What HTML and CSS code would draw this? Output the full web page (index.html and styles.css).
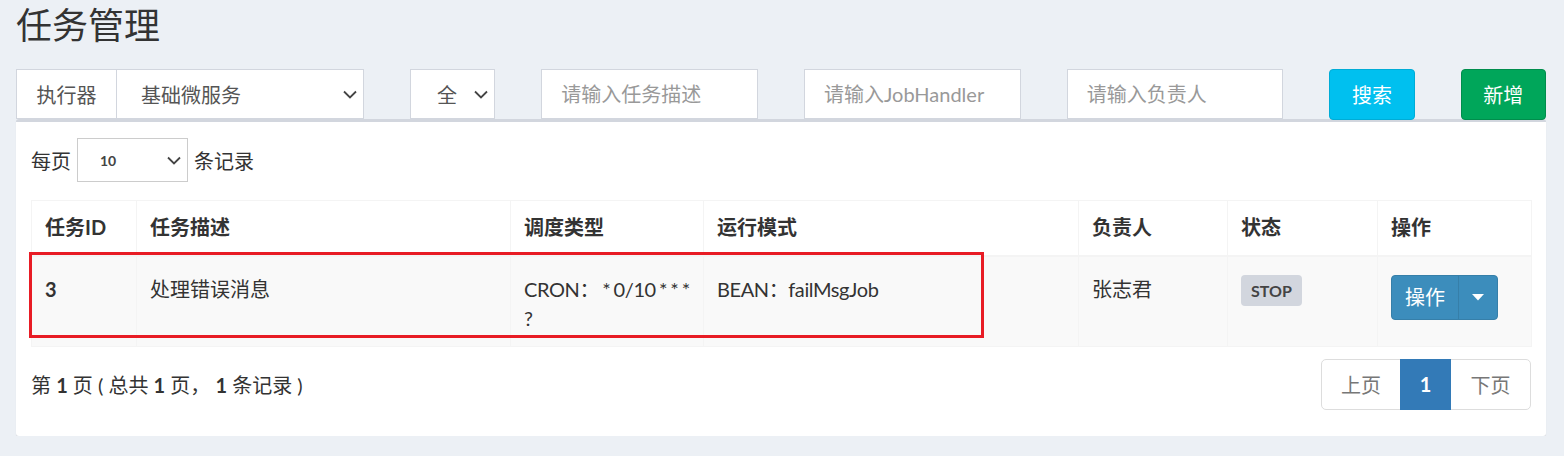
FILE: index.html
```html
<!DOCTYPE html>
<html lang="zh-CN">
<head>
<meta charset="utf-8">
<title>任务管理</title>
<link rel="stylesheet" href="styles.css">
</head>
<body>
<div class="page">
  <h1 class="title">任务管理</h1>

  <div class="filters">
    <div class="exec-group">
      <span class="addon">执行器</span>
      <div class="sel sel-exec">
        <span>基础微服务</span>
        <svg class="chev" width="14" height="9" viewBox="0 0 14 9"><path d="M1 1.5 L7 7.5 L13 1.5" fill="none" stroke="#444" stroke-width="1.8"/></svg>
      </div>
    </div>
    <div class="sel sel-status">
      <span>全</span>
      <svg class="chev" width="14" height="9" viewBox="0 0 14 9"><path d="M1 1.5 L7 7.5 L13 1.5" fill="none" stroke="#444" stroke-width="1.8"/></svg>
    </div>
    <input class="inp" type="text" placeholder="请输入任务描述">
    <input class="inp" type="text" placeholder="请输入JobHandler">
    <input class="inp" type="text" placeholder="请输入负责人">
    <button class="btn btn-search">搜索</button>
    <button class="btn btn-add">新增</button>
  </div>

  <div class="box">
    <div class="length">
      <span>每页</span>
      <div class="sel sel-len">
        <span class="len-val">10</span>
        <svg class="chev" width="14" height="9" viewBox="0 0 14 9"><path d="M1 1.5 L7 7.5 L13 1.5" fill="none" stroke="#444" stroke-width="1.8"/></svg>
      </div>
      <span>条记录</span>
    </div>

    <div class="table-wrap">
      <table class="jobs">
        <colgroup>
          <col class="c-id"><col class="c-desc"><col class="c-type"><col class="c-mode"><col class="c-author"><col class="c-status"><col class="c-op">
        </colgroup>
        <thead>
          <tr>
            <th>任务ID</th><th>任务描述</th><th>调度类型</th><th>运行模式</th><th>负责人</th><th>状态</th><th>操作</th>
          </tr>
        </thead>
        <tbody>
          <tr>
            <td class="id">3</td>
            <td>处理错误消息</td>
            <td class="tight">CRON： * 0/10 * * * ?</td>
            <td class="tight">BEAN：failMsgJob</td>
            <td>张志君</td>
            <td><span class="label">STOP</span></td>
            <td>
              <div class="btn-group">
                <span class="bg-main">操作</span>
                <span class="bg-caret"><svg width="12" height="7" viewBox="0 0 12 7"><path d="M0 0 H12 L6 6.5 Z" fill="#fff"/></svg></span>
              </div>
            </td>
          </tr>
        </tbody>
      </table>
      <div class="highlight"></div>
    </div>

    <div class="footer">
      <div class="info">第 <b>1</b> 页 ( 总共 <b>1</b> 页， <b>1</b> 条记录 )</div>
      <ul class="pager">
        <li class="pg disabled">上页</li>
        <li class="pg active">1</li>
        <li class="pg disabled">下页</li>
      </ul>
    </div>
  </div>
</div>
</body>
</html>
```

FILE: styles.css
```css
* { box-sizing: border-box; }

html, body {
  margin: 0;
  padding: 0;
  background: #ecf0f5;
}

body {
  font-family: "Lato", "Noto Sans CJK SC", sans-serif;
  font-size: 20px;
  color: #333;
}

.page {
  padding: 0 18px 0 16px;
}

.title {
  margin: 0;
  font-size: 36px;
  font-weight: 400;
  line-height: 50px;
  color: #333;
}

/* filter bar */
.filters {
  margin-top: 19px;
  display: grid;
  grid-template-columns: repeat(12, 1fr);
  column-gap: 46px;
  height: 50px;
}

.exec-group {
  grid-column: span 3;
  display: flex;
  height: 50px;
}

.addon {
  width: 100px;
  flex: none;
  background: #fff;
  border: 1px solid #d2d6de;
  border-right: none;
  display: flex;
  align-items: center;
  justify-content: center;
  color: #555;
}

.sel {
  background: #fff;
  border: 1px solid #d2d6de;
  display: flex;
  align-items: center;
  justify-content: space-between;
  color: #555;
  height: 50px;
}

.sel-exec {
  flex: 1;
  padding: 0 6px 0 24px;
}

.sel-status {
  grid-column: span 1;
  padding: 0 6px 0 26px;
}

.chev { flex: none; }

.inp {
  grid-column: span 2;
  height: 50px;
  border: 1px solid #d2d6de;
  background: #fff;
  padding: 0 19px;
  font: inherit;
  font-size: 20px;
  color: #555;
  outline: none;
  width: 100%;
  min-width: 0;
}

.inp::placeholder { color: #999; }

.btn {
  grid-column: span 1;
  height: 51px;
  border-radius: 4px;
  border: 1px solid transparent;
  color: #fff;
  font: inherit;
  font-size: 20px;
  padding: 0;
}

.btn-search { background: #00c0ef; border-color: #00acd6; }
.btn-add { background: #00a65a; border-color: #008d4c; }

/* box */
.box {
  background: #fff;
  border-top: 3px solid #d2d6de;
  border-radius: 3px;
  box-shadow: 0 1px 1px rgba(0, 0, 0, 0.1);
  padding: 16px 15px 26px 15px;
}

.length {
  display: flex;
  align-items: center;
  gap: 6px;
  height: 44px;
}

.sel-len {
  height: 44px;
  width: 111px;
  padding: 0 6px 0 22px;
  border-color: #ccc;
  color: #555;
}

.len-val {
  font-size: 14px;
  font-weight: 700;
  color: #444;
}

.table-wrap {
  position: relative;
  margin-top: 18px;
}

.jobs {
  width: 1500px;
  border-collapse: collapse;
  table-layout: fixed;
  border: 1px solid #f4f4f4;
}

.c-id { width: 105px; }
.c-desc { width: 374px; }
.c-type { width: 193px; }
.c-mode { width: 375px; }
.c-author { width: 149px; }
.c-status { width: 150px; }
.c-op { width: 154px; }

.jobs th, .jobs td {
  border: 1px solid #f4f4f4;
  text-align: left;
  vertical-align: top;
  line-height: 29px;
  padding: 0 13px;
}

.jobs th {
  font-weight: 700;
  height: 55px;
  vertical-align: middle;
  border-bottom: 2px solid #f4f4f4;
}

.jobs tbody tr { background: #f9f9f9; }

.jobs td {
  padding-top: 18px;
  padding-bottom: 13px;
  height: 90px;
}

.jobs td.id { font-weight: 700; }

.jobs td.tight {
  letter-spacing: -0.4px;
  word-spacing: -1.5px;
}

.label {
  display: inline-block;
  background: #d2d6de;
  color: #444;
  font-size: 16px;
  font-weight: 700;
  line-height: 31px;
  padding: 0 10px;
  border-radius: 4px;
  vertical-align: top;
}

.btn-group {
  display: inline-flex;
  height: 45px;
  background: #3c8dbc;
  border: 1px solid #367fa9;
  border-radius: 4px;
  color: #fff;
  vertical-align: top;
}

.bg-main {
  width: 67px;
  display: flex;
  align-items: center;
  justify-content: center;
  border-right: 1px solid #367fa9;
}

.bg-caret {
  width: 38px;
  display: flex;
  align-items: center;
  justify-content: center;
}

.highlight {
  position: absolute;
  left: -2px;
  top: 52px;
  width: 955px;
  height: 86px;
  border: 3px solid #e81c25;
  pointer-events: none;
}

/* footer */
.footer {
  display: flex;
  justify-content: space-between;
  align-items: center;
  margin-top: 12px;
}

.info b { font-weight: 700; }

.pager {
  list-style: none;
  margin: 0;
  padding: 0;
  display: flex;
  height: 51px;
}

.pg {
  display: flex;
  align-items: center;
  justify-content: center;
  border: 1px solid #ddd;
  margin-left: -1px;
  color: #777;
  background: #fff;
}

.pg:first-child {
  width: 80px;
  margin-left: 0;
  border-radius: 5px 0 0 5px;
}

.pg.active {
  width: 51px;
  background: #337ab7;
  border-color: #337ab7;
  color: #fff;
  font-weight: 700;
  position: relative;
}

.pg:last-child {
  width: 81px;
  border-radius: 0 5px 5px 0;
}
```
